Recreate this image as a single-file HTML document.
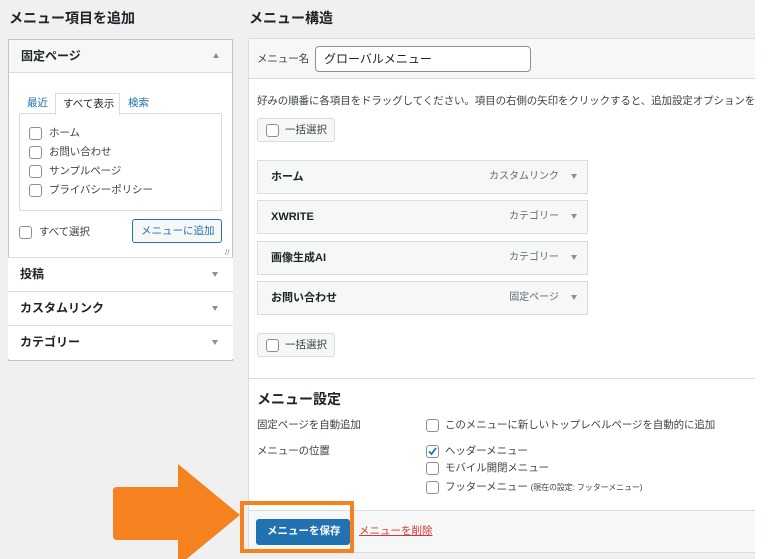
<!DOCTYPE html>
<html><head><meta charset="utf-8"><style>
*{box-sizing:border-box;margin:0;padding:0}
body{width:780px;height:559px;position:relative;overflow:hidden;background:#fff;font-family:"Liberation Sans","Noto Sans CJK JP",sans-serif;color:#1d2327;line-height:1.2}
.a{position:absolute}
.bg{left:0;top:0;width:755px;height:559px;background:#f0f0f1}
.h2{font-size:14px;font-weight:bold}
.cb{position:absolute;width:13px;height:13px;border:1px solid #8c8f94;border-radius:3px;background:#fff}
.t{font-size:10.5px;color:#3c434a;white-space:nowrap;letter-spacing:-0.1px}
.tri{position:absolute;width:0;height:0;border-left:3.5px solid transparent;border-right:3.5px solid transparent;border-top:5px solid #8c8f94}
.row{position:absolute;left:8px;width:225px;height:34px;background:#fff;border-top:1px solid #dcdcde;font-size:12px;font-weight:bold;padding:9px 12px}
.item{position:absolute;left:257px;width:331px;height:34px;background:#f6f7f7;border:1px solid #dcdcde;font-size:11px;font-weight:bold;padding:9px 13px;line-height:14px}
.item span{position:absolute;right:28px;top:9px;font-weight:normal;color:#646970;font-size:10px;line-height:14px}
.item i{position:absolute;right:10px;top:13px;width:0;height:0;border-left:3.5px solid transparent;border-right:3.5px solid transparent;border-top:5px solid #8c8f94}
.bulk{position:absolute;left:257px;width:78px;height:24px;border:1px solid #dcdcde;background:#f6f7f7;border-radius:3px;font-size:10.5px;color:#3c434a;padding:5px 0 0 27px}
.bulk b{position:absolute;left:8px;top:5px;width:13px;height:13px;border:1px solid #8c8f94;border-radius:3px;background:#fff}
</style></head><body>
<div class="a bg"></div>
<div class="a h2" style="left:9px;top:10px">メニュー項目を追加</div>
<div class="a h2" style="left:249px;top:10px">メニュー構造</div>

<div class="a" style="left:8px;top:39px;width:225px;height:322px;border:1px solid #c3c4c7;background:#fff"></div>
<div class="a" style="left:9px;top:40px;width:223px;height:33px;background:#f6f7f7;border-bottom:1px solid #dcdcde;font-size:12px;font-weight:bold;padding:9px 12px">固定ページ</div>
<div class="a" style="left:213px;top:53px;width:0;height:0;border-left:3.5px solid transparent;border-right:3.5px solid transparent;border-bottom:5px solid #8c8f94"></div>
<div class="a" style="left:27px;top:97px;font-size:10.5px;color:#2271b1">最近</div>
<div class="a" style="left:55px;top:93px;width:65px;height:22px;border:1px solid #dcdcde;border-bottom:none;background:#fff;font-size:10.5px;padding:4px 0 0 7px;z-index:2">すべて表示</div>
<div class="a" style="left:128px;top:97px;font-size:10.5px;color:#2271b1">検索</div>
<div class="a" style="left:19px;top:113px;width:203px;height:98px;border:1px solid #dcdcde"></div>
<div class="cb" style="left:29px;top:127px"></div><div class="a t" style="left:49px;top:127px">ホーム</div>
<div class="cb" style="left:29px;top:146px"></div><div class="a t" style="left:49px;top:146px">お問い合わせ</div>
<div class="cb" style="left:29px;top:165px"></div><div class="a t" style="left:49px;top:165px">サンプルページ</div>
<div class="cb" style="left:29px;top:184px"></div><div class="a t" style="left:49px;top:184px">プライバシーポリシー</div>
<div class="cb" style="left:19px;top:226px"></div><div class="a t" style="left:39px;top:226px">すべて選択</div>
<div class="a" style="left:132px;top:219px;width:90px;height:24px;border:1px solid #2271b1;border-radius:3px;background:#f6f7f7;font-size:10.5px;color:#2271b1;padding:5px 0 0 8px;white-space:nowrap">メニューに追加</div>
<div class="a" style="left:225px;top:248px;font-size:8px;color:#8c8f94">//</div>
<div class="row" style="top:257px">投稿</div><div class="tri" style="left:212px;top:272px"></div>
<div class="row" style="top:291px">カスタムリンク</div><div class="tri" style="left:212px;top:306px"></div>
<div class="row" style="top:325px">カテゴリー</div><div class="tri" style="left:212px;top:340px"></div>

<div class="a" style="left:248px;top:38px;width:507px;height:515px;border:1px solid #dcdcde;border-right:none;background:#fff"></div>
<div class="a" style="left:249px;top:39px;width:506px;height:40px;background:#f6f7f7;border-bottom:1px solid #dcdcde"></div>
<div class="a t" style="left:257px;top:53px">メニュー名</div>
<div class="a" style="left:315px;top:46px;width:216px;height:26px;border:1px solid #8c8f94;border-radius:4px;background:#fff;font-size:12px;padding:5px 0 0 8px">グローバルメニュー</div>
<div class="a t" style="left:257px;top:95px">好みの順番に各項目をドラッグしてください。項目の右側の矢印をクリックすると、追加設定オプションを</div>
<div class="bulk" style="top:118px"><b></b>一括選択</div>
<div class="item" style="top:160px">ホーム<span>カスタムリンク</span><i></i></div>
<div class="item" style="top:200px">XWRITE<span>カテゴリー</span><i></i></div>
<div class="item" style="top:241px">画像生成AI<span>カテゴリー</span><i></i></div>
<div class="item" style="top:281px">お問い合わせ<span>固定ページ</span><i></i></div>
<div class="bulk" style="top:333px"><b></b>一括選択</div>
<div class="a" style="left:249px;top:378px;width:506px;height:1px;background:#dcdcde"></div>
<div class="a h2" style="left:257px;top:391px">メニュー設定</div>
<div class="a t" style="left:257px;top:419px">固定ページを自動追加</div>
<div class="cb" style="left:426px;top:419px"></div><div class="a t" style="left:445px;top:419px">このメニューに新しいトップレベルページを自動的に追加</div>
<div class="a t" style="left:257px;top:445px">メニューの位置</div>
<div class="cb" style="left:426px;top:445px"></div>
<svg class="a" style="left:426px;top:445px" width="13" height="13"><path d="M3 6.5 L5.5 9 L10 3" stroke="#2271b1" stroke-width="1.8" fill="none"/></svg>
<div class="a t" style="left:445px;top:445px">ヘッダーメニュー</div>
<div class="cb" style="left:426px;top:462px"></div><div class="a t" style="left:445px;top:462px">モバイル開閉メニュー</div>
<div class="cb" style="left:426px;top:481px"></div><div class="a t" style="left:445px;top:481px">フッターメニュー <span style="font-size:8px">(現在の設定: フッターメニュー)</span></div>
<div class="a" style="left:249px;top:510px;width:506px;height:43px;background:#f6f7f7;border-top:1px solid #dcdcde;border-bottom:1px solid #dcdcde"></div>
<div class="a" style="left:256px;top:519px;width:94px;height:26px;background:#2271b1;border-radius:3px;color:#fff;font-size:10.5px;font-weight:bold;padding:6px 0 0 11px;white-space:nowrap">メニューを保存</div>
<div class="a" style="left:359px;top:525px;font-size:10.5px;color:#d63638;text-decoration:underline">メニューを削除</div>

<div class="a" style="left:240px;top:501px;width:114px;height:52px;border:4px solid #f5821f"></div>
<svg class="a" style="left:0;top:0" width="780" height="559"><path d="M117 487 H178 V464 L240 515 L178 566 V540 H117 Q113 540 113 536 V491 Q113 487 117 487 Z" fill="#f5821f"/></svg>
</body></html>
